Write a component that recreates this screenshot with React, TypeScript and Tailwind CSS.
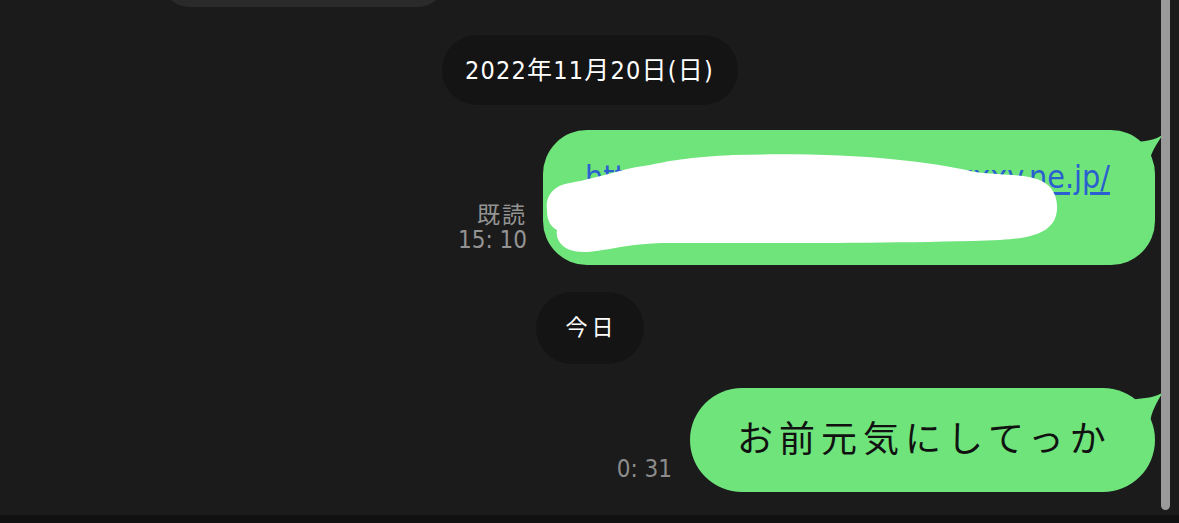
import React from "react";

function Tail({ d }: { d: string }) {
  return (
    <svg
      className="absolute top-0 right-[-8px] overflow-visible"
      width="40"
      height="40"
      viewBox="0 0 40 40"
    >
      <path d={d} fill="#6ee47b" />
    </svg>
  );
}

export default function App() {
  return (
    <div className="relative w-[1179px] h-[523px] bg-[#1b1b1b] overflow-hidden flex flex-col font-['DejaVu_Sans_Condensed','Noto_Sans_CJK_JP',sans-serif]">
      <div className="h-[515px] flex flex-col">
        {/* previous bubble bottom */}
        <div className="h-[7px] overflow-hidden ml-[160px] w-[287px]">
          <div className="h-[60px] -mt-[53px] rounded-[30px] bg-[#2a2a2a]" />
        </div>

        {/* date pill */}
        <div className="flex justify-center mt-[28px]">
          <div className="h-[70px] w-[296px] rounded-full bg-[#141414] flex items-center justify-center text-white text-[25px] tracking-[1.2px] leading-none">
            2022年11月20日(日)
          </div>
        </div>

        {/* link message */}
        <div className="flex justify-end items-end pr-[24px] mt-[25px]">
          <div className="flex flex-col items-end mr-[16px] mb-[12px] text-[#939393] leading-[25px]">
            <span className="text-[23px] tracking-[2px]">既読</span>
            <span className="text-[24px]">15: 10</span>
          </div>
          <div className="relative w-[612px] h-[135px] rounded-[44px] bg-[#6ee47b] pl-[42px] pr-[45px] pt-[25px]">
            <Tail d="M 0 4 C 6 8, 10 12, 14 12 C 26 11, 35 9, 40 4 C 34 14, 28 22, 27 30 L 0 30 Z" />
            <div className="flex justify-between text-[32px] leading-[44px] text-[#2b5fcf] underline underline-offset-4">
              <span>https://</span>
              <span>www.xxxxxxxxy.ne.jp/</span>
            </div>
            <svg
              className="absolute left-0 top-0"
              width="612"
              height="135"
              viewBox="0 0 612 135"
            >
              <path
                d="M 4 80 C 2 65, 12 55, 27 53 C 60 47, 80 38, 107 35 C 130 30, 150 27, 190 25 C 300 22, 380 30, 432 42 C 455 45, 475 44, 490 48 C 508 52, 515 65, 514 80 C 512 100, 495 108, 457 110 C 350 114, 200 113, 120 113 C 80 114, 60 122, 40 122 C 20 122, 12 110, 14 100 C 6 96, 4 88, 4 80 Z"
                fill="#ffffff"
              />
            </svg>
          </div>
        </div>

        {/* today pill */}
        <div className="flex justify-center mt-[27px]">
          <div className="h-[72px] w-[108px] rounded-full bg-[#141414] flex items-center justify-center text-white text-[22px] tracking-[4px] leading-none pl-[4px]">
            今日
          </div>
        </div>

        {/* last message */}
        <div className="flex justify-end items-end pr-[24px] mt-[24px]">
          <span className="mr-[18px] mb-[10px] text-[24px] leading-[25px] text-[#8c8c8c]">
            0: 31
          </span>
          <div className="relative w-[465px] h-[104px] rounded-full bg-[#6ee47b] flex items-center pl-[47px]">
            <Tail d="M 0 7 C 6 10, 10 12, 14 11 C 26 10, 35 8, 40 4 C 34 14, 28 24, 27 35 L 0 35 Z" />
            <span className="text-[36px] tracking-[6px] leading-none text-[#111111]">
              お前元気にしてっか
            </span>
          </div>
        </div>
      </div>
      <div className="h-[8px] bg-[#111111]" />
      <div className="absolute right-[9px] top-0 w-[9px] h-[510px] rounded-b-full bg-[#9a9a9a]" />
    </div>
  );
}
